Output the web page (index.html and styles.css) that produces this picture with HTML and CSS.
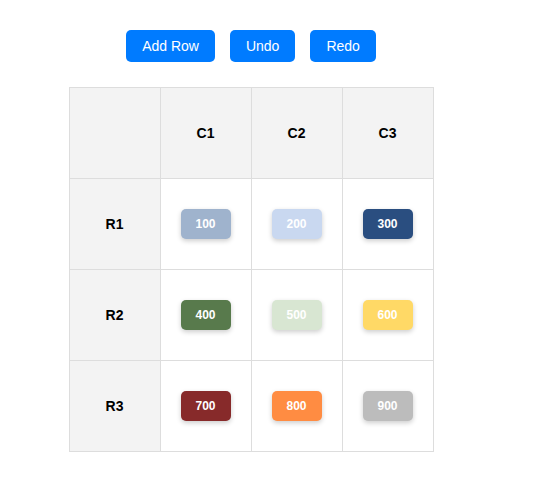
FILE: index.html
```html
<!DOCTYPE html>
<html>
<head>
<meta charset="utf-8">
<link rel="stylesheet" href="styles.css">
</head>
<body>
<div class="wrap">
  <div class="toolbar">
    <button class="btn">Add Row</button>
    <button class="btn">Undo</button>
    <button class="btn">Redo</button>
  </div>
  <table class="grid">
    <tr><th></th><th>C1</th><th>C2</th><th>C3</th></tr>
    <tr><th>R1</th>
      <td><span class="chip c100">100</span></td>
      <td><span class="chip c200">200</span></td>
      <td><span class="chip c300">300</span></td></tr>
    <tr><th>R2</th>
      <td><span class="chip c400">400</span></td>
      <td><span class="chip c500">500</span></td>
      <td><span class="chip c600">600</span></td></tr>
    <tr><th>R3</th>
      <td><span class="chip c700">700</span></td>
      <td><span class="chip c800">800</span></td>
      <td><span class="chip c900">900</span></td></tr>
  </table>
</div>
</body>
</html>
```
FILE: styles.css
```css
html, body { margin: 0; padding: 0; background: #fff; }
body { font-family: "Liberation Sans", Arial, sans-serif; }
.wrap {
  width: 486px;
  margin-left: 8px;
  padding-top: 30px;
  display: flex;
  flex-direction: column;
  align-items: center;
}
.toolbar { display: flex; gap: 15px; margin-bottom: 25px; }
.btn {
  background: #007bff;
  color: #fff;
  border: none;
  border-radius: 5px;
  height: 32px;
  padding: 0 16px;
  font-family: "Liberation Sans", Arial, sans-serif;
  font-size: 14px;
}
.grid { border-collapse: collapse; }
.grid th, .grid td {
  width: 91px;
  height: 91px;
  padding: 0;
  border: 1px solid #dddddd;
  text-align: center;
  vertical-align: middle;
  box-sizing: border-box;
}
.grid th { background: #f3f3f3; font-size: 14px; font-weight: bold; color: #000; }
.grid td { background: #fff; }
.chip {
  display: inline-flex;
  align-items: center;
  justify-content: center;
  width: 50px;
  height: 30px;
  border-radius: 5px;
  color: #fff;
  font-weight: bold;
  font-size: 12px;
  box-shadow: 0 2px 5px rgba(0,0,0,0.2);
}
.c100 { background: #9fb3cd; }
.c200 { background: #c9d8f0; }
.c300 { background: #2a4e80; }
.c400 { background: #587a4c; }
.c500 { background: #d8e6d2; }
.c600 { background: #ffd966; }
.c700 { background: #872a2a; }
.c800 { background: #ff8c42; }
.c900 { background: #bcbcbc; }
```
